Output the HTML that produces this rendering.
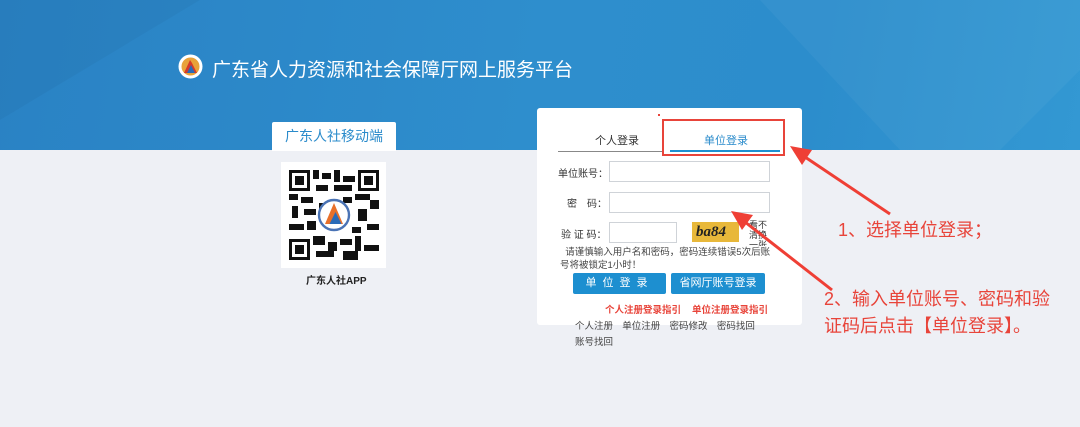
<!DOCTYPE html>
<html><head><meta charset="utf-8"><style>
*{margin:0;padding:0;box-sizing:border-box}
body{width:1080px;height:427px;overflow:hidden;background:#eef0f5;font-family:"Liberation Sans","Noto Sans CJK SC",sans-serif;position:relative}
.hdr{position:absolute;left:0;top:0;width:1080px;height:150px;background:linear-gradient(100deg,#2a82c4 0%,#2e8ecd 50%,#2c8dcc 75%,#3398d3 100%)}
.a{position:absolute;white-space:nowrap}
.inp{position:absolute;border:1px solid #cfd3d8;background:#fff}
.lbl{position:absolute;font-size:10px;color:#333}
.btn{position:absolute;background:#1d8fd0;color:#fff;font-size:11px;text-align:center;line-height:21px;border-radius:2px}
.red{color:#e8443a}
</style></head><body>
<div class="hdr"></div>
<svg class="a" style="left:0;top:0" width="1080" height="150"><polygon points="760,0 900,150 1000,150 1080,70 1080,0" fill="#ffffff" opacity="0.04"/><polygon points="0,0 200,0 0,120" fill="#000" opacity="0.03"/></svg>
<svg class="a" style="left:178px;top:54px" width="25" height="25" viewBox="0 0 25 25"><circle cx="12.5" cy="12.5" r="12" fill="#fff"/><circle cx="12.5" cy="12.5" r="9" fill="#e8a23a"/><path d="M6 19 L12 6 L14 9 L19 19 Z" fill="#d63a2a"/><path d="M9 19 L13 11 L17 19Z" fill="#2a6bb8"/></svg>
<div class="a" style="left:212px;top:55px;font-size:19px;color:#fff">广东省人力资源和社会保障厅网上服务平台</div>
<div class="a" style="left:272px;top:122px;width:124px;height:29px;background:#fff;border-radius:2px 2px 0 0;color:#2a8bcb;font-size:14px;text-align:center;line-height:29px">广东人社移动端</div>
<div class="a" style="left:281px;top:162px;width:105px;height:106px;background:#fff"></div>
<svg class="a" style="left:289px;top:170px" width="90" height="90" viewBox="0 0 30 30"><rect width="30" height="30" fill="#fff"/>
<g fill="#111"><rect x="0" y="0" width="7" height="7"/><rect x="23" y="0" width="7" height="7"/><rect x="0" y="23" width="7" height="7"/></g>
<g fill="#fff"><rect x="1" y="1" width="5" height="5"/><rect x="24" y="1" width="5" height="5"/><rect x="1" y="24" width="5" height="5"/></g>
<g fill="#111"><rect x="2" y="2" width="3" height="3"/><rect x="25" y="2" width="3" height="3"/><rect x="2" y="25" width="3" height="3"/>
<rect x="8" y="0" width="2" height="3"/><rect x="11" y="1" width="3" height="2"/><rect x="15" y="0" width="2" height="4"/><rect x="18" y="2" width="4" height="2"/><rect x="9" y="5" width="4" height="2"/><rect x="15" y="5" width="6" height="2"/>
<rect x="0" y="8" width="3" height="2"/><rect x="4" y="9" width="4" height="2"/><rect x="22" y="8" width="5" height="2"/><rect x="27" y="10" width="3" height="3"/><rect x="1" y="12" width="2" height="4"/><rect x="5" y="13" width="4" height="2"/>
<rect x="23" y="13" width="3" height="4"/><rect x="0" y="18" width="5" height="2"/><rect x="6" y="17" width="3" height="3"/><rect x="21" y="19" width="3" height="2"/><rect x="26" y="18" width="4" height="2"/>
<rect x="8" y="22" width="4" height="3"/><rect x="13" y="24" width="3" height="3"/><rect x="17" y="23" width="4" height="2"/><rect x="22" y="22" width="2" height="5"/><rect x="25" y="25" width="5" height="2"/><rect x="9" y="27" width="6" height="2"/><rect x="18" y="27" width="5" height="3"/><rect x="10" y="11" width="2" height="3"/><rect x="18" y="9" width="3" height="2"/></g>
<circle cx="15" cy="15" r="5" fill="#fff" stroke="#4a73b5" stroke-width="0.8"/><path d="M12 18 L15 11 L18 18Z" fill="#e8702a"/><path d="M13.5 18 L15.5 14 L17.5 18Z" fill="#2a6bb8"/></svg>
<div class="a" style="left:306px;top:272px;font-size:10px;font-weight:bold;color:#222">广东人社APP</div>

<div class="a" style="left:537px;top:108px;width:265px;height:217px;background:#fff;border-radius:3px"></div>
<div class="a" style="left:595px;top:132px;font-size:11px;color:#333">个人登录</div>
<div class="a" style="left:558px;top:151px;width:106px;height:1px;background:#888"></div>
<div class="a" style="left:704px;top:132px;font-size:11px;color:#2a8bcb">单位登录</div>
<div class="a" style="left:670px;top:150px;width:110px;height:2px;background:#1d8fd0"></div>
<div class="a" style="left:662px;top:119px;width:123px;height:37px;border:2px solid #e8443a"></div>
<div class="a" style="left:658px;top:114px;width:2px;height:2px;background:#e8443a"></div>
<div class="lbl" style="left:558px;top:165px">单位账号：</div>
<div class="inp" style="left:609px;top:161px;width:161px;height:21px"></div>
<div class="lbl" style="left:567px;top:195px">密　码：</div>
<div class="inp" style="left:609px;top:192px;width:161px;height:21px"></div>
<div class="lbl" style="left:561px;top:226px">验 证 码：</div>
<div class="inp" style="left:609px;top:222px;width:68px;height:21px"></div>
<div class="a" style="left:692px;top:222px;width:47px;height:20px;background:#e8b83a;font-family:'Liberation Serif',serif;font-size:15px;font-weight:bold;color:#222;line-height:20px;padding-left:4px;font-style:italic">ba84</div>
<div class="a" style="left:749px;top:220px;font-size:9px;color:#333;line-height:10px;white-space:normal;width:20px;height:26px;overflow:hidden">看不清换一张</div>
<div class="a" style="left:560px;top:246px;font-size:9.5px;color:#444;line-height:13px;width:212px;white-space:normal">&nbsp;&nbsp;请谨慎输入用户名和密码，密码连续错误5次后账号将被锁定1小时！</div>
<div class="btn" style="left:573px;top:273px;width:93px;letter-spacing:6px">单位登录</div>
<div class="btn" style="left:671px;top:273px;width:94px">省网厅账号登录</div>
<div class="a red" style="left:605px;top:302px;font-size:9.5px;font-weight:bold">个人注册登录指引</div>
<div class="a red" style="left:692px;top:302px;font-size:9.5px;font-weight:bold">单位注册登录指引</div>
<div class="a" style="left:575px;top:318px;font-size:9.5px;color:#444;word-spacing:2px">个人注册&nbsp; 单位注册&nbsp; 密码修改&nbsp; 密码找回</div>
<div class="a" style="left:575px;top:334px;font-size:9.5px;color:#444">账号找回</div>

<svg class="a" style="left:0;top:0" width="1080" height="427">
<line x1="890" y1="214" x2="805" y2="157" stroke="#ef3f35" stroke-width="3"/>
<polygon points="790,146 812,150 802,165" fill="#ef3f35"/>
<line x1="832" y1="290" x2="745" y2="222" stroke="#ef3f35" stroke-width="3"/>
<polygon points="731,211 753,215 742,230" fill="#ef3f35"/>
</svg>
<div class="a red" style="left:838px;top:216px;font-size:18px">1、选择单位登录；</div>
<div class="a red" style="left:824px;top:285px;font-size:18px">2、输入单位账号、密码和验</div>
<div class="a red" style="left:824px;top:312px;font-size:18px">证码后点击【单位登录】。</div>
</body></html>
